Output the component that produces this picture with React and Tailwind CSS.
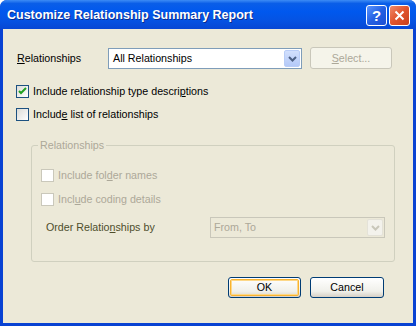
import React from "react";

const font = { fontFamily: '"Liberation Sans", Arial, sans-serif' };

function Check({ checked, disabled }) {
  return (
    <span
      className={
        "inline-flex w-[13px] h-[13px] shrink-0 items-center justify-center border " +
        (disabled
          ? "border-[#cac8bb] bg-white"
          : "border-[#1c5180] bg-[linear-gradient(135deg,#dcdcd7,#ffffff)]")
      }
    >
      {checked && (
        <svg width="9" height="9" viewBox="0 0 9 9">
          <path d="M1 4 L3 6 L8 1" stroke="#21a121" strokeWidth="2" fill="none" />
        </svg>
      )}
    </span>
  );
}

function Arrow({ color }) {
  return (
    <svg width="9" height="6" viewBox="0 0 9 6">
      <path d="M1 1 L4.5 4.5 L8 1" stroke={color} strokeWidth="2" fill="none" />
    </svg>
  );
}

export default function App() {
  return (
    <div
      className="w-[416px] h-[326px] flex flex-col rounded-t-[7px] bg-[#0842d3] text-[10.7px] text-black"
      style={font}
    >
      {/* title bar */}
      <div className="h-[29px] shrink-0 flex items-center rounded-t-[7px] bg-[linear-gradient(180deg,#3d8cf5_0%,#0a5ee8_12%,#0058ee_40%,#0553e3_70%,#0747d4_100%)] pl-[7px] pr-[6px]">
        <span className="text-white font-bold text-[12.5px] [text-shadow:1px_1px_0_#0c2c8c] flex-1 pt-[1px]">
          Customize Relationship Summary Report
        </span>
        <div className="flex gap-[2px] mt-[2px]">
          <div className="w-[21px] h-[21px] rounded-[3px] border border-white bg-[linear-gradient(135deg,#5a95ff,#2460e3_50%,#1d4fd3)] flex items-center justify-center text-white font-bold text-[15px] leading-none">
            ?
          </div>
          <div className="w-[21px] h-[21px] rounded-[3px] border border-white bg-[linear-gradient(135deg,#f08a6a,#e0532c_50%,#c8401c)] flex items-center justify-center">
            <svg width="11" height="11" viewBox="0 0 11 11">
              <path d="M1.5 1.5 L9.5 9.5 M9.5 1.5 L1.5 9.5" stroke="white" strokeWidth="2" />
            </svg>
          </div>
        </div>
      </div>

      {/* client */}
      <div className="flex-1 mx-[3px] mb-[3px] bg-[#ece9d8] flex flex-col pt-[18px]">
        {/* row 1 */}
        <div className="flex items-center h-[22px] pl-[14px]">
          <span className="w-[91px]">
            <u>R</u>elationships
          </span>
          <div className="w-[194px] h-[21px] border border-[#7f9db9] bg-white flex items-center mt-[1px]">
            <span className="flex-1 pl-[4px]">All Relationships</span>
            <div className="w-[16px] h-[17px] mr-[1px] rounded-[2px] bg-[linear-gradient(180deg,#d2e0fd,#b4c9f8)] border border-[#b9cdf7] flex items-center justify-center">
              <Arrow color="#4d6185" />
            </div>
          </div>
          <div className="ml-[8px] w-[82px] h-[22px] rounded-[3px] border border-[#c9c7ba] bg-[#f5f4ea] flex items-center justify-center text-[#aca899]">
            <span>
              <u>S</u>elect...
            </span>
          </div>
        </div>

        {/* checkboxes */}
        <div className="flex items-center gap-[4px] pl-[13px] mt-[16px] h-[13px]">
          <Check checked />
          <span>
            Include relationship type descri<u>p</u>tions
          </span>
        </div>
        <div className="flex items-center gap-[4px] pl-[13px] mt-[10px] h-[13px]">
          <Check />
          <span>
            Includ<u>e</u> list of relationships
          </span>
        </div>

        {/* group box */}
        <div className="relative ml-[28px] w-[364px] h-[117px] mt-[24px] border border-[#d0d0bf] rounded-[3px] flex flex-col">
          <span className="absolute left-[6px] top-[-7px] px-[2px] bg-[#ece9d8] text-[#aca899] leading-[12px]">
            Relationships
          </span>
          <div className="flex items-center gap-[4px] pl-[9px] mt-[23px] h-[13px] text-[#aca899]">
            <Check disabled />
            <span>
              Include fol<u>d</u>er names
            </span>
          </div>
          <div className="flex items-center gap-[4px] pl-[9px] mt-[11px] h-[13px] text-[#aca899]">
            <Check disabled />
            <span>
              Incl<u>u</u>de coding details
            </span>
          </div>
          <div className="flex items-center mt-[11px] h-[21px]">
            <span className="w-[178px] pl-[14px] text-[#4e4e2c]">
              Order Relatio<u>n</u>ships by
            </span>
            <div className="w-[175px] h-[21px] border border-[#c9c7ba] flex items-center">
              <span className="flex-1 pl-[3px] text-[#aca899]">From, To</span>
              <div className="w-[16px] h-[17px] mr-[1px] rounded-[2px] bg-[#f3f2ec] border border-[#e4e2d8] flex items-center justify-center">
                <Arrow color="#c9c7ba" />
              </div>
            </div>
          </div>
        </div>

        {/* buttons */}
        <div className="flex mt-[15px] pl-[225px] gap-[9px]">
          <div className="w-[73px] h-[21px] rounded-[3px] border border-[#003c74] bg-[linear-gradient(180deg,#ffffff,#f0f0ea_70%,#d6d0c5)] p-[1px]">
            <div className="w-full h-full rounded-[2px] border border-[#f8b330] shadow-[inset_0_0_0_1px_#fdd889] flex items-center justify-center">
              OK
            </div>
          </div>
          <div className="w-[74px] h-[21px] rounded-[3px] border border-[#003c74] bg-[linear-gradient(180deg,#ffffff,#f0f0ea_70%,#d6d0c5)] flex items-center justify-center">
            Cancel
          </div>
        </div>
      </div>
    </div>
  );
}
